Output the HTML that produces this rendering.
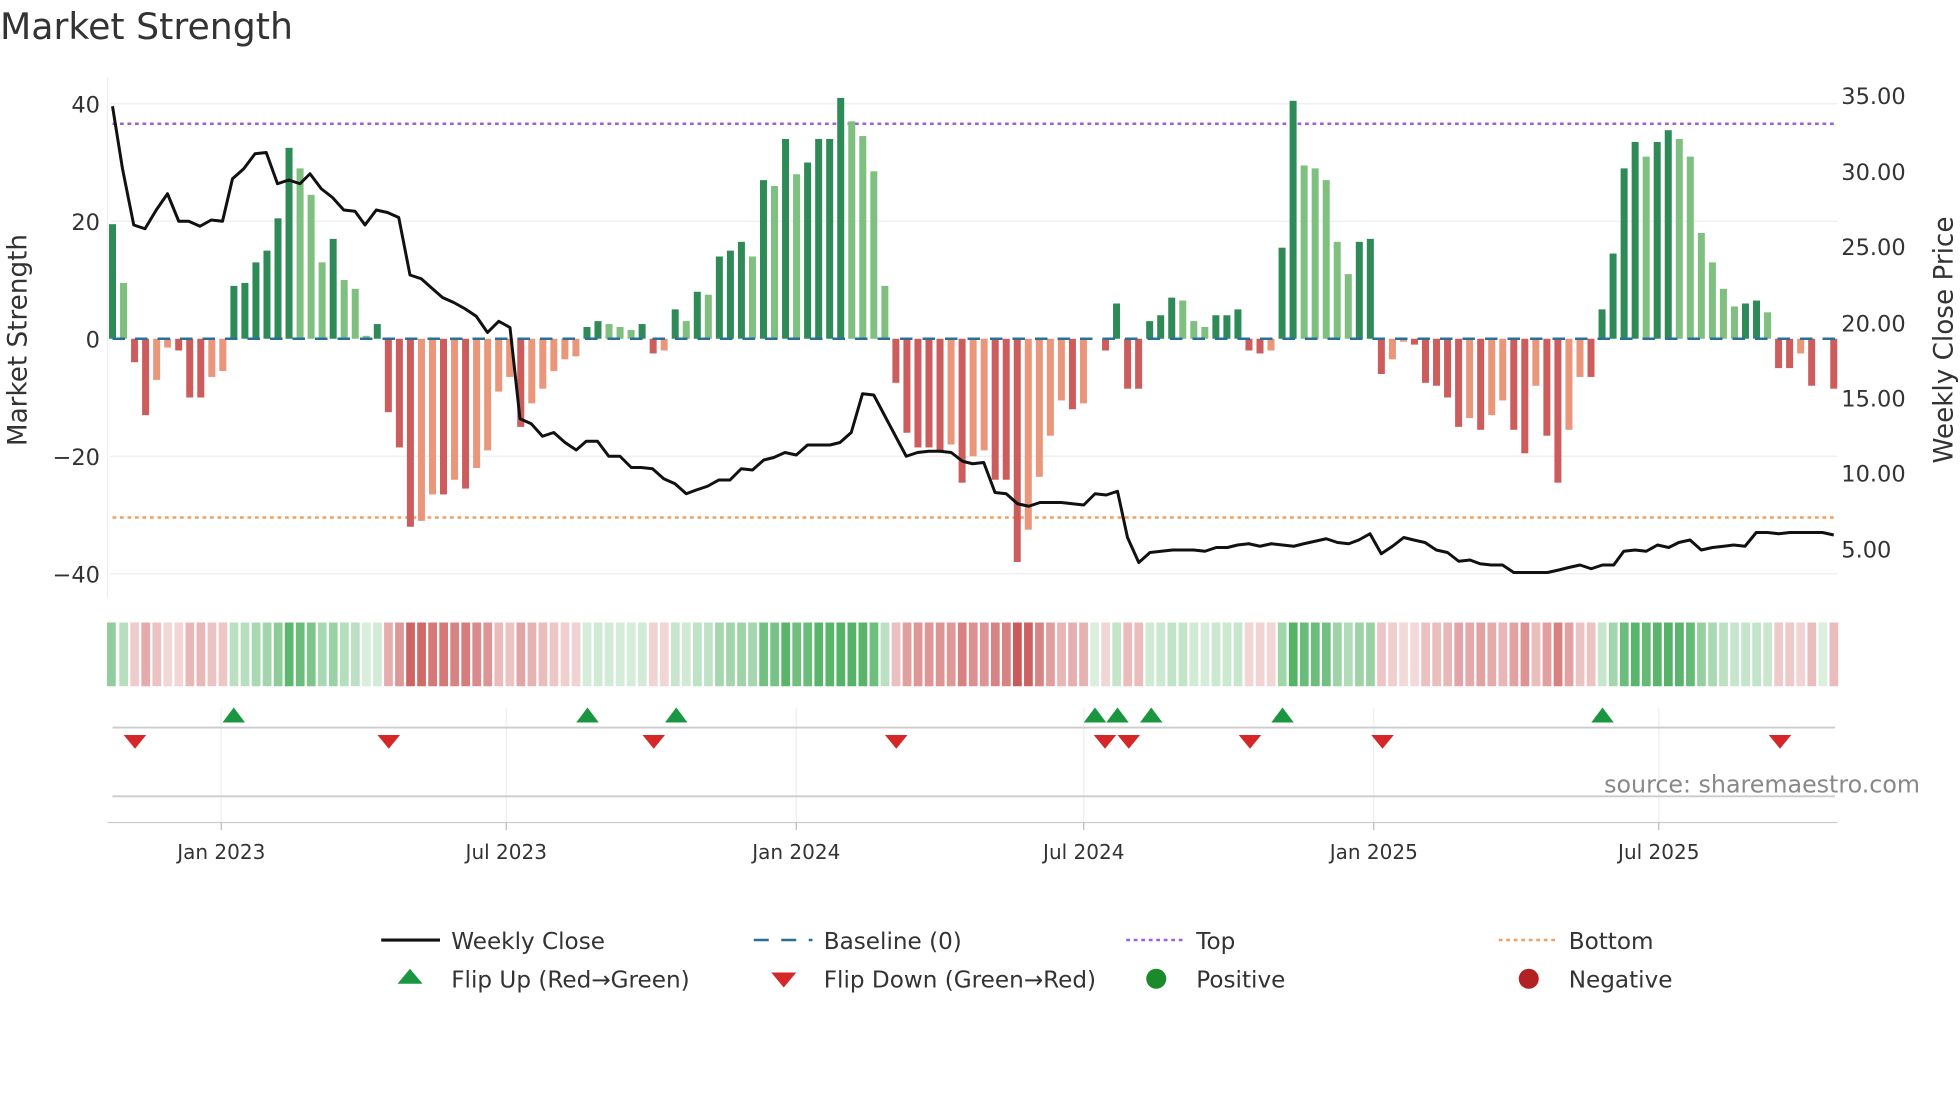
<!DOCTYPE html>
<html><head><meta charset="utf-8"><style>
html,body{margin:0;padding:0;background:#fff;}
svg{display:block;font-family:"DejaVu Sans","Liberation Sans",sans-serif;}
</style></head><body>
<svg id="s" width="1960" height="1102" viewBox="0 0 1568 881.6" xmlns="http://www.w3.org/2000/svg">
<rect width="1568" height="882" fill="#fff"/>
<text x="0" y="31" font-size="29" fill="#333">Market Strength</text>
<g stroke="#eeeeee" stroke-width="1">
<line x1="88" y1="83" x2="1470" y2="83"/><line x1="88" y1="177" x2="1470" y2="177"/>
<line x1="88" y1="365" x2="1470" y2="365"/><line x1="88" y1="459" x2="1470" y2="459"/>
<line x1="86" y1="62" x2="86" y2="478"/>
</g>
<g font-size="18" fill="#333" text-anchor="end">
<text x="80" y="90">40</text><text x="80" y="184">20</text><text x="80" y="278">0</text>
<text x="80" y="372">−20</text><text x="80" y="466">−40</text>
</g>
<g font-size="18" fill="#333">
<text x="1473" y="83">35.00</text><text x="1473" y="144">30.00</text><text x="1473" y="204">25.00</text>
<text x="1473" y="265">20.00</text><text x="1473" y="325">15.00</text><text x="1473" y="385">10.00</text>
<text x="1473" y="446">5.00</text>
</g>
<text transform="translate(21,272) rotate(-90)" font-size="21" fill="#333" text-anchor="middle">Market Strength</text>
<text transform="translate(1562,272) rotate(-90)" font-size="21" fill="#333" text-anchor="middle">Weekly Close Price</text>
<line x1="90" y1="99" x2="1470" y2="99" stroke="#9b5fe0" stroke-width="2" stroke-dasharray="3,3"/>
<line x1="90" y1="414" x2="1470" y2="414" stroke="#f0a060" stroke-width="2" stroke-dasharray="3,3"/>
<g id="bars"></g>
<line x1="90" y1="271" x2="1470" y2="271" stroke="#2a6f97" stroke-width="2" stroke-dasharray="10,8"/>
<polyline id="price" fill="none" stroke="#111" stroke-width="2.4" stroke-linejoin="round"/>
<g id="heat"></g>
<g stroke="#eeeeee"><line x1="177" y1="566" x2="177" y2="658"/><line x1="405" y1="566" x2="405" y2="658"/><line x1="637" y1="566" x2="637" y2="658"/><line x1="867" y1="566" x2="867" y2="658"/><line x1="1099" y1="566" x2="1099" y2="658"/><line x1="1327" y1="566" x2="1327" y2="658"/></g>
<line x1="90" y1="582" x2="1468" y2="582" stroke="#ccc" stroke-width="1.5"/>
<line x1="90" y1="637" x2="1468" y2="637" stroke="#ccc" stroke-width="1.5"/>
<line x1="86" y1="658" x2="1470" y2="658" stroke="#ccc" stroke-width="1"/>
<g id="mk"></g>
<text x="1536" y="634" font-size="19" fill="#888" text-anchor="end">source: sharemaestro.com</text>
<g font-size="16" fill="#333" text-anchor="middle">
<text x="177" y="687">Jan 2023</text><text x="405" y="687">Jul 2023</text><text x="637" y="687">Jan 2024</text>
<text x="867" y="687">Jul 2024</text><text x="1099" y="687">Jan 2025</text><text x="1327" y="687">Jul 2025</text>
</g>
<g stroke="#bbb"><line x1="177" y1="658" x2="177" y2="664"/><line x1="405" y1="658" x2="405" y2="664"/><line x1="637" y1="658" x2="637" y2="664"/><line x1="867" y1="658" x2="867" y2="664"/><line x1="1099" y1="658" x2="1099" y2="664"/><line x1="1327" y1="658" x2="1327" y2="664"/></g>
<g font-size="18.5" fill="#333">
<line x1="305" y1="752" x2="352" y2="752" stroke="#111" stroke-width="2.5"/><text x="361" y="759">Weekly Close</text>
<line x1="603" y1="752" x2="650" y2="752" stroke="#2a6f97" stroke-width="2" stroke-dasharray="12,10"/><text x="659" y="759">Baseline (0)</text>
<line x1="901" y1="752" x2="946" y2="752" stroke="#9b5fe0" stroke-width="2" stroke-dasharray="3,3"/><text x="957" y="759">Top</text>
<line x1="1199" y1="752" x2="1244" y2="752" stroke="#f0a060" stroke-width="2" stroke-dasharray="3,3"/><text x="1255" y="759">Bottom</text>
<polygon points="328,775 338,787 318,787" fill="#1a9641"/><text x="361" y="790">Flip Up (Red→Green)</text>
<polygon points="617,778 637,778 627,790" fill="#d62728"/><text x="659" y="790">Flip Down (Green→Red)</text>
<circle cx="925" cy="783" r="8" fill="#1a8a2a"/><text x="957" y="790">Positive</text>
<circle cx="1223" cy="783" r="8" fill="#b22222"/><text x="1255" y="790">Negative</text>
</g>
</svg>
<script>
var v=[19.5,9.5,-4,-13,-7,-1.5,-2,-10,-10,-6.5,-5.5,9,9.5,13,15,20.5,32.5,29,24.5,13,17,10,8.5,0.5,2.5,-12.5,-18.5,-32,-31,-26.5,-26.5,-24,-25.5,-22,-19,-9,-6.5,-15,-11,-8.5,-5.5,-3.5,-3,2,3,2.5,2,1.5,2.5,-2.5,-2,5,3,8,7.5,14,15,16.5,14,27,26,34,28,30,34,34,41,37,34.5,28.5,9,-7.5,-16,-18.5,-18.5,-19,-18,-24.5,-20,-19,-24,-24,-38,-32.5,-23.5,-16.5,-10.5,-12,-11,0,-2,6,-8.5,-8.5,3,4,7,6.5,3,2,4,4,5,-2,-2.5,-2,15.5,40.5,29.5,29,27,16.5,11,16.5,17,-6,-3.5,-0.5,-1,-7.5,-8,-10,-15,-13.5,-15.5,-13,-10.5,-15.5,-19.5,-8,-16.5,-24.5,-15.5,-6.5,-6.5,5,14.5,29,33.5,31,33.5,35.5,34,31,18,13,8.5,5.5,6,6.5,4.5,-5,-5,-2.5,-8,0,-8.5];
var NS="http://www.w3.org/2000/svg";
function el(p,t,a){var e=document.createElementNS(NS,t);for(var k in a)e.setAttribute(k,a[k]);p.appendChild(e);return e;}
var B=document.getElementById('bars'),H=document.getElementById('heat');
var step=(1467-90)/156;
for(var i=0;i<v.length;i++){var x=90+i*step,y=v[i];
 var d=i>0?y-v[i-1]:y; var c;
 if(y>=0)c=(d>=0)?'#2e8b57':'#7fbf7f'; else c=(d<=0)?'#cd5c5c':'#e9967a';
 var h=Math.abs(y)*4.7; if(h>0.3)el(B,'rect',{x:x-2.8,y:y>=0?271-h:271,width:5.6,height:h,fill:c});
 el(H,'rect',{x:x-3.4+(i==0?-1:0),y:498,width:7,height:51,fill:y>=0?'#4caf5f':'#c85050','fill-opacity':(0.2+Math.min(1,Math.abs(y)/35)*0.75).toFixed(2)});
}
var pts="90,85 98,135 107,180 116,183 125,168 134,155 143,177 151,177 160,181 169,176 178,177 186,143 195,135 204,123 213,122 222,147 231,144 240,147 248,139 257,151 266,158 275,168 284,169 292,180 301,168 310,170 319,174 328,220 337,223 346,231 354,238 363,242 372,247 381,253 390,266 399,257 408,262 416,335 425,339 434,349 443,346 452,354 461,360 469,353 478,353 487,365 496,365 505,374 513,374 522,375 531,383 540,387 549,395 557,392 566,389 575,384 584,384 593,375 602,376 611,368 619,366 628,362 637,364 646,356 655,356 664,356 672,354 681,346 690,315 699,316 708,333 717,350 725,365 734,362 743,361 752,361 761,362 770,369 778,371 787,370 796,394 805,395 814,403 823,405 832,402 840,402 849,402 858,403 867,404 876,395 885,396 894,393 902,430 911,450 920,442 929,441 938,440 946,440 955,440 964,441 973,438 982,438 990,436 999,435 1008,437 1017,435 1026,436 1035,437 1043,435 1052,433 1061,431 1070,434 1079,435 1087,432 1096,427 1105,443 1114,437 1123,430 1131,432 1140,434 1149,440 1158,442 1167,449 1176,448 1184,451 1193,452 1202,452 1211,458 1220,458 1229,458 1238,458 1247,456 1255,454 1264,452 1273,455 1282,452 1291,452 1299,441 1308,440 1317,441 1326,436 1335,438 1343,434 1352,432 1361,440 1370,438 1379,437 1387,436 1396,437 1405,426 1414,426 1423,427 1432,426 1440,426 1449,426 1458,426 1467,428";
document.getElementById('price').setAttribute('points',pts);
var M=document.getElementById('mk');
[187,470,541,876,894,921,1026,1282].forEach(function(x){el(M,'polygon',{points:(x)+',566 '+(x+9)+',578 '+(x-9)+',578',fill:'#1a9641'});});
[108,311,523,717,884,903,1000,1106,1424].forEach(function(x){el(M,'polygon',{points:(x-9)+',588 '+(x+9)+',588 '+x+',599',fill:'#d62728'});});
</script>
</body></html>
